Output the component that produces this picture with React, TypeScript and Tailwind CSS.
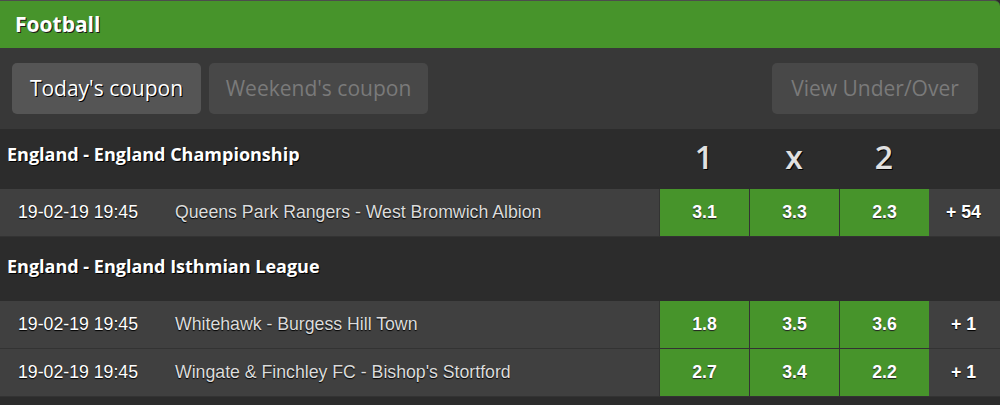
const leagues = [
  {
    name: "England - England Championship",
    showLabels: true,
    matches: [
      { date: "19-02-19 19:45", teams: "Queens Park Rangers - West Bromwich Albion", odds: ["3.1", "3.3", "2.3"], more: "+ 54" },
    ],
  },
  {
    name: "England - England Isthmian League",
    showLabels: false,
    matches: [
      { date: "19-02-19 19:45", teams: "Whitehawk - Burgess Hill Town", odds: ["1.8", "3.5", "3.6"], more: "+ 1" },
      { date: "19-02-19 19:45", teams: "Wingate & Finchley FC - Bishop's Stortford", odds: ["2.7", "3.4", "2.2"], more: "+ 1" },
    ],
  },
];

const heading = "font-['Open_Sans',sans-serif]";
const body = "font-['Liberation_Sans',Arial,sans-serif]";

function LeagueHeader({ name, showLabels }: { name: string; showLabels: boolean }) {
  return (
    <div className={`flex bg-[#2c2c2c] ${showLabels ? "h-[60px]" : "h-[64px]"}`}>
      <div
        className={`flex-1 pl-[7px] ${showLabels ? "pt-[12px]" : "pt-[16px]"} ${heading} text-[18px] font-bold text-white [text-shadow:1px_1px_0_#000]`}
      >
        {name}
      </div>
      {showLabels && (
        <div className={`flex w-[341px] ${heading} text-[32px] font-semibold text-[#e0e0e0] [text-shadow:1px_1px_0_#000]`}>
          {["1", "x", "2"].map((l) => (
            <div key={l} className="w-[90px] pt-[3px] text-center leading-[50px]">
              {l}
            </div>
          ))}
        </div>
      )}
    </div>
  );
}

function MatchRow({ date, teams, odds, more }: { date: string; teams: string; odds: string[]; more: string }) {
  return (
    <div className={`flex h-[48px] border-b border-[#333333] bg-[#404040] ${body} text-[17.7px]`}>
      <div className="w-[175px] pl-[18px] flex items-center text-white [text-shadow:0_1px_1px_#000]">{date}</div>
      <div className="flex-1 flex items-center text-[#dcdcdc] [text-shadow:0_1px_1px_#000]">{teams}</div>
      <div className="flex">
        {odds.map((o, i) => (
          <div
            key={i}
            className="w-[90px] flex items-center justify-center border-l border-[#333333] bg-[#47942b] font-bold text-white [text-shadow:0_1px_1px_#222]"
          >
            {o}
          </div>
        ))}
      </div>
      <div className="w-[71px] flex items-center justify-center pr-[2px] font-bold text-white [text-shadow:0_1px_1px_#000]">
        {more}
      </div>
    </div>
  );
}

export default function App() {
  return (
    <div className="w-[1000px] h-[405px] overflow-hidden bg-[#2c2c2c]">
      {/* Title bar */}
      <div
        className={`h-[48px] flex items-center px-[15px] bg-[#47942b] border-t border-[#4d4d4d] rounded-tr-[6px] ${heading} text-[21px] font-bold text-white [text-shadow:1px_1px_0_#1a1a1a]`}
      >
        Football
      </div>

      {/* Coupon toolbar */}
      <div className={`h-[81px] flex items-center px-[12px] bg-[#383838] ${heading} text-[21px]`}>
        <button className="h-[51px] w-[189px] rounded-[5px] bg-[#555555] text-white [text-shadow:1px_1px_0_#000]">
          Today's coupon
        </button>
        <button className="ml-[8px] h-[51px] w-[219px] rounded-[5px] bg-[#484848] text-[#7a7a7a]">
          Weekend's coupon
        </button>
        <div className="flex-1" />
        <button className="mr-[10px] h-[51px] w-[206px] rounded-[5px] bg-[#484848] text-[#7a7a7a]">
          View Under/Over
        </button>
      </div>

      {leagues.map((lg) => (
        <div key={lg.name}>
          <LeagueHeader name={lg.name} showLabels={lg.showLabels} />
          {lg.matches.map((m, i) => (
            <MatchRow key={i} {...m} />
          ))}
        </div>
      ))}
    </div>
  );
}
